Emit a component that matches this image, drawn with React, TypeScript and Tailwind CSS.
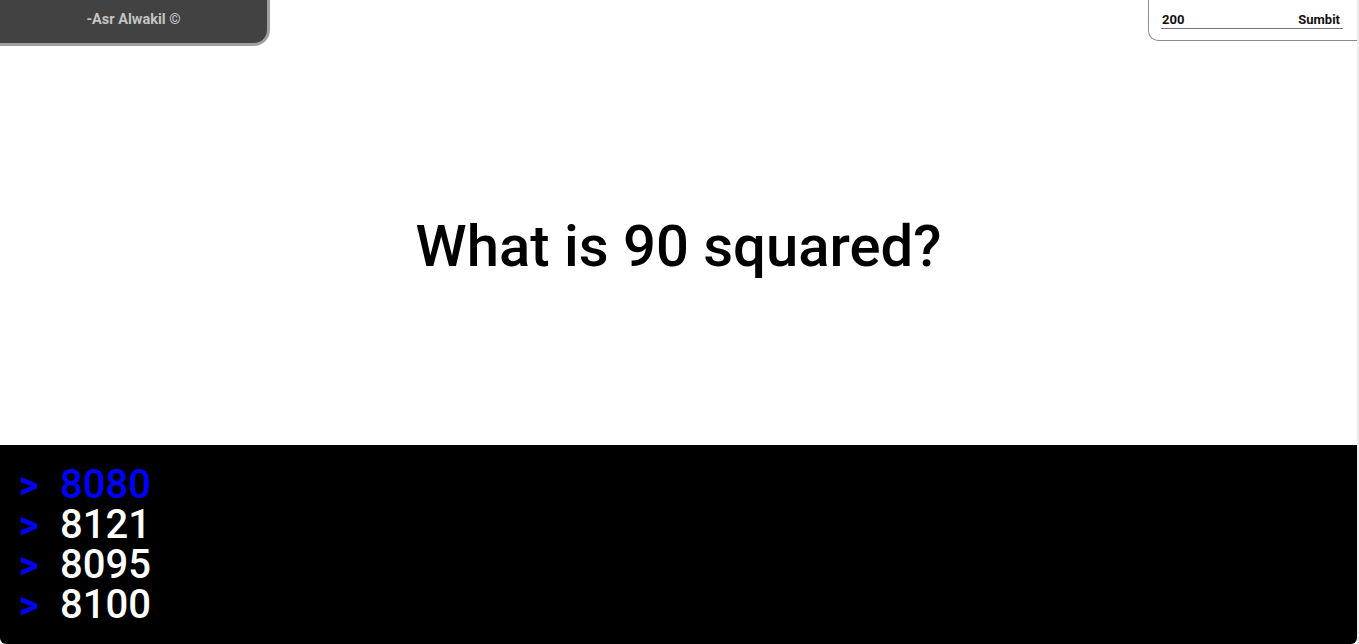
import React from "react";

export default function App() {
  const answers = [
    { v: "8080", active: true },
    { v: "8121", active: false },
    { v: "8095", active: false },
    { v: "8100", active: false },
  ];
  return (
    <div className="flex w-[1359px] h-[644px] bg-white overflow-hidden" style={{ fontFamily: "Roboto, 'Liberation Sans', sans-serif" }}>
      <div className="flex flex-col w-[1357px] h-full">
        <div className="flex justify-between items-start h-[46px]">
          <div className="w-[270px] h-[46px] bg-[#424242] border-r-[3px] border-b-[3px] border-[#a0a0a0] rounded-br-[16px] flex items-center justify-center pb-[3px]">
            <span className="text-[14.5px] font-bold text-[#c4c4c4]">-Asr Alwakil ©</span>
          </div>
          <div className="w-[209px] h-[41px] border-l border-b border-[#8c8c8c] rounded-bl-[10px] pl-[12px] pr-[14px] pt-[11px]">
            <div className="flex justify-between items-center border-b border-[#777777] pl-[1px] pr-[3px] h-[18px] text-[13px] font-bold text-[#111111] leading-[16px]">
              <span>200</span>
              <span>Sumbit</span>
            </div>
          </div>
        </div>
        <div className="h-[399px] flex items-center justify-center">
          <h1 className="text-[58px] font-medium text-[#000000] leading-[70px]">What is 90 squared?</h1>
        </div>
        <div className="flex-1 bg-black rounded-b-[6px] pt-[20px] pl-[19px]">
          {answers.map((a) => (
            <div key={a.v} className="flex items-center h-[40px]">
              <span className="w-[41px] text-[38px] font-bold text-[#0000ff] leading-[38px]">&gt;</span>
              <span className={`text-[40px] font-medium leading-[38px] ${a.active ? "text-[#0000ff]" : "text-white"}`}>{a.v}</span>
            </div>
          ))}
        </div>
      </div>
      <div className="w-[2px] h-full bg-[#ececec]" />
    </div>
  );
}
